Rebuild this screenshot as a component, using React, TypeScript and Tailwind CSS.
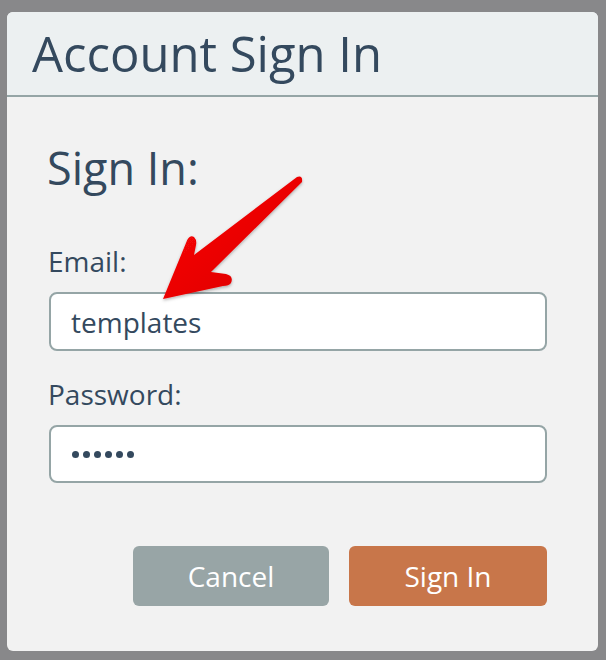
import React from "react";

const font = { fontFamily: '"Open Sans", "Noto Sans", sans-serif' };

function Arrow() {
  return (
    <svg
      className="pointer-events-none absolute left-0 top-0"
      width={606}
      height={660}
      viewBox="0 0 606 660"
    >
      <defs>
        <linearGradient id="arrowFill" x1="0" y1="0" x2="1" y2="1">
          <stop offset="0" stopColor="#ff0a0a" />
          <stop offset="1" stopColor="#d80000" />
        </linearGradient>
        <filter id="arrowShadow" x="-20%" y="-20%" width="140%" height="140%">
          <feDropShadow dx="0" dy="1.5" stdDeviation="1.5" floodColor="#000" floodOpacity="0.3" />
        </filter>
      </defs>
      <path
        d="M 297 177 Q 303 175 302 182 L 211 272 L 226 274 Q 234 276 231 283 Q 229 286 223 286 L 163 299 L 186 243 Q 189 234 194 237 Q 197 240 196 245 L 194 255 Z"
        fill="url(#arrowFill)"
        filter="url(#arrowShadow)"
      />
    </svg>
  );
}

export default function App() {
  return (
    <div
      className="relative h-[660px] w-[606px] bg-[#88888a] pb-[9px] pl-[7px] pr-[8px] pt-[12px]"
      style={font}
    >
      <div className="flex h-full flex-col overflow-hidden rounded-[6px] bg-[#f2f2f2]">
        {/* header */}
        <div className="h-[85px] border-b-2 border-[#95a5a6] bg-[#ecf0f1] pl-[25px] pt-[17px]">
          <h1 className="text-[49px] leading-none text-[#34495e]">Account Sign In</h1>
        </div>

        {/* form */}
        <div className="flex flex-1 flex-col pl-[42px] pr-[51px] pt-[48px]">
          <h2 className="-ml-[2px] text-[45px] leading-none text-[#34495e]">Sign In:</h2>

          <label className="-ml-[1px] mt-[57px] text-[28px] leading-none text-[#34495e]">Email:</label>
          <div className="mt-[17px] flex h-[59px] items-center rounded-[8px] border-2 border-[#95a5a6] bg-white px-[20px] text-[28px] leading-none text-[#34495e]">
            templates
          </div>

          <label className="-ml-[1px] mt-[29px] text-[28px] leading-none text-[#34495e]">Password:</label>
          <div className="mt-[17px] flex h-[58px] items-center gap-[4px] rounded-[8px] border-2 border-[#95a5a6] bg-white px-[21px]">
            {[0, 1, 2, 3, 4, 5].map((i) => (
              <span key={i} className="h-[7px] w-[7px] rounded-full bg-[#34495e]" />
            ))}
          </div>

          <div className="mt-[63px] flex justify-end gap-[20px]">
            <button className="h-[60px] w-[196px] rounded-[6px] bg-[#98a5a6] text-[28px] leading-none text-white">
              Cancel
            </button>
            <button className="h-[60px] w-[198px] rounded-[6px] bg-[#c8764a] text-[28px] leading-none text-white">
              Sign In
            </button>
          </div>
        </div>
      </div>
      <Arrow />
    </div>
  );
}
